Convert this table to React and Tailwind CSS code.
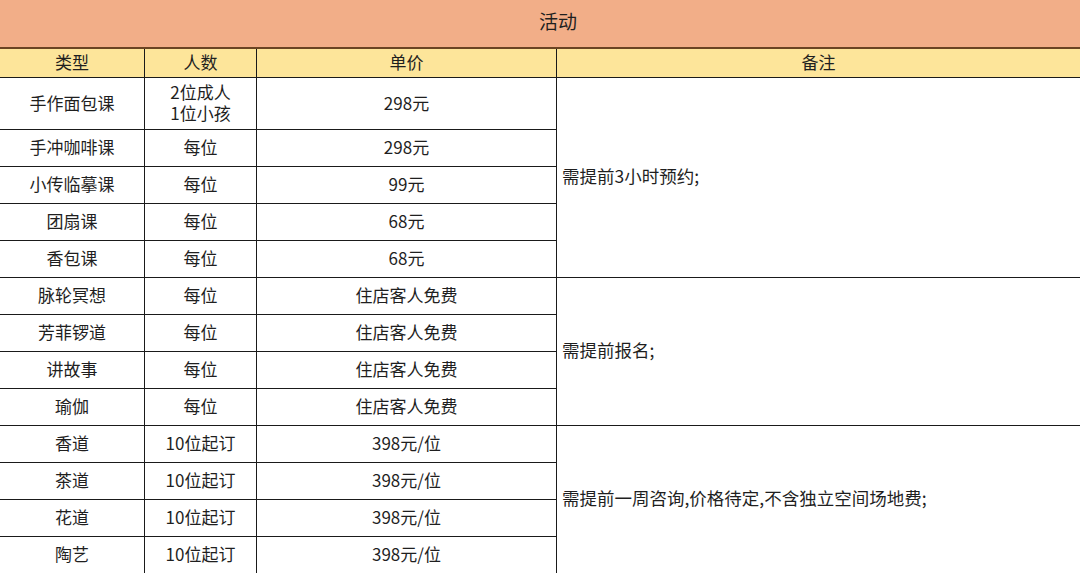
import React from "react";

const groups = [
  {
    note: "需提前3小时预约;",
    rows: [
      ["手作面包课", "2位成人\n1位小孩", "298元"],
      ["手冲咖啡课", "每位", "298元"],
      ["小传临摹课", "每位", "99元"],
      ["团扇课", "每位", "68元"],
      ["香包课", "每位", "68元"],
    ],
  },
  {
    note: "需提前报名;",
    rows: [
      ["脉轮冥想", "每位", "住店客人免费"],
      ["芳菲锣道", "每位", "住店客人免费"],
      ["讲故事", "每位", "住店客人免费"],
      ["瑜伽", "每位", "住店客人免费"],
    ],
  },
  {
    note: "需提前一周咨询,价格待定,不含独立空间场地费;",
    rows: [
      ["香道", "10位起订", "398元/位"],
      ["茶道", "10位起订", "398元/位"],
      ["花道", "10位起订", "398元/位"],
      ["陶艺", "10位起订", "398元/位"],
    ],
  },
];

const spans = { 5: "row-span-5", 4: "row-span-4" };

const cell =
  "flex items-center justify-center text-center border-b border-r border-[#1a1a1a] leading-[21px] whitespace-pre-line pb-[3px]";

const App = () => {
  return (
    <div
      className="w-[1080px] h-[573px] overflow-hidden bg-white text-[#1f1f1f] text-[17px]"
      style={{ fontFamily: '"Noto Sans CJK SC", "Noto Sans", sans-serif' }}
    >
      <div className="h-[49px] bg-[#f2ae88] border-b-2 border-[#6b4423] flex items-center justify-center text-[19px] pb-[4px] pl-[36px]">
        活动
      </div>
      <div className="grid grid-cols-[145px_112px_300px_1fr] grid-rows-[29px_52px_repeat(12,37px)]">
        <div className={`${cell} bg-[#fde59a]`}>类型</div>
        <div className={`${cell} bg-[#fde59a]`}>人数</div>
        <div className={`${cell} bg-[#fde59a]`}>单价</div>
        <div className={`${cell} bg-[#fde59a] border-r-0`}>备注</div>
        {groups.map((g, gi) =>
          g.rows.map((r, ri) => (
            <React.Fragment key={`${gi}-${ri}`}>
              <div className={cell}>{r[0]}</div>
              <div className={cell}>{r[1]}</div>
              <div className={cell}>{r[2]}</div>
              {ri === 0 && (
                <div
                  className={`${spans[g.rows.length]} flex items-center border-b border-[#1a1a1a] pl-[5px] pb-[3px] text-[17.5px]`}
                >
                  {g.note}
                </div>
              )}
            </React.Fragment>
          ))
        )}
      </div>
    </div>
  );
};

export default App;
